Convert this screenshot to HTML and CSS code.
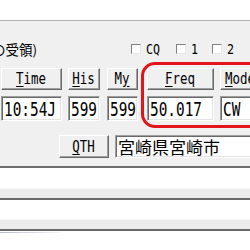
FILE: index.html
```html
<!DOCTYPE html>
<html lang="ja">
<head>
  <meta charset="UTF-8" />
  <title>QSO Entry</title>
  <link rel="stylesheet" href="styles.css">
</head>
<body>
  <div class="window">
    <!-- Title area -->
    <div class="top"></div>

    <!-- Entry panel -->
    <div class="panel">
      <div class="opts">
        <span class="caption">の受領)</span>
        <label class="check"><span class="box"></span><span class="narrow">CQ</span></label>
        <label class="check"><span class="box"></span><span class="narrow">1</span></label>
        <label class="check"><span class="box"></span><span class="narrow">2</span></label>
      </div>

      <div class="entry">
        <div class="col col-time">
          <div class="btn"><span class="narrow"><u>T</u>ime</span></div>
          <div class="field"><span class="mono">10:54J</span></div>
        </div>
        <div class="col col-his">
          <div class="btn"><span class="narrow"><u>H</u>is</span></div>
          <div class="field"><span class="mono">599</span></div>
        </div>
        <div class="col col-my">
          <div class="btn"><span class="narrow">M<u>y</u></span></div>
          <div class="field"><span class="mono">599</span></div>
        </div>
        <div class="col col-freq">
          <div class="btn"><span class="narrow"><u>F</u>req</span></div>
          <div class="field"><span class="mono">50.017</span></div>
        </div>
        <div class="col col-mode">
          <div class="btn"><span class="narrow"><u>M</u>ode</span></div>
          <div class="field"><span class="mono">CW</span></div>
        </div>
      </div>

      <div class="qth-row">
        <div class="btn btn-qth"><span class="narrow"><u>Q</u>TH</span></div>
        <div class="field field-qth">宮崎県宮崎市</div>
      </div>

      <!-- annotation -->
      <div class="highlight"></div>
    </div>

    <!-- List below -->
    <div class="list-gap"></div>
    <div class="strip"></div>
    <div class="list-gap gap-2"></div>
    <div class="strip strip-2"></div>
    <div class="faint"></div>
  </div>
</body>
</html>
```

FILE: styles.css
```css
body {
  margin: 0;
  padding: 0;
  background-color: #fff;
  font-family: "Liberation Sans", "Noto Sans CJK JP", sans-serif;
  color: #000;
}

.window {
  width: 250px;
  height: 250px;
  overflow: hidden;
}

.top {
  height: 20px;
  background-color: #fff;
  border-bottom: 1px solid #b4b4b4;
}

.panel {
  position: relative;
  height: 145px;
  background-color: #f0f0f0;
  border-bottom: 2px solid #6d6d6d;
  display: flex;
  flex-direction: column;
}

.narrow {
  display: inline-block;
  font-family: "DejaVu Sans Mono", monospace;
  font-size: 15px;
  transform: scaleX(0.83);
}

.opts {
  margin-top: 19px;
  height: 18px;
  display: flex;
  align-items: center;
}

.caption {
  flex: 0 0 139px;
  margin-left: -8px;
  font-family: "Noto Sans CJK JP", sans-serif;
  font-size: 13.5px;
  white-space: nowrap;
}

.check {
  display: flex;
  align-items: center;
  gap: 5px;
  margin-right: 13px;
}

.check .narrow {
  font-size: 14px;
  transform-origin: left;
}

.box {
  width: 8px;
  height: 8px;
  background-color: #fff;
  border: 1px solid;
  border-color: #808080 #e6e6e6 #e6e6e6 #808080;
}

.entry {
  margin-top: 10px;
  padding-left: 1px;
  display: flex;
}

.col {
  display: flex;
  flex-direction: column;
  gap: 6px;
  flex: 0 0 auto;
}

.col-time { width: 61px; }
.col-his { width: 32px; margin-left: 6px; }
.col-my { width: 31px; margin-left: 7px; }
.col-freq { width: 67px; margin-left: 9px; }
.col-mode { width: 40px; margin-left: 6px; }

.btn {
  height: 22px;
  box-sizing: border-box;
  background-color: #f0f0f0;
  border: 1px solid;
  border-color: #fff #696969 #696969 #fff;
  box-shadow: inset -1px -1px #a0a0a0;
  display: flex;
  align-items: center;
  justify-content: center;
  white-space: nowrap;
  overflow: visible;
}

.btn u {
  text-underline-offset: 2px;
}

.field {
  height: 25px;
  box-sizing: border-box;
  background-color: #fff;
  border: 1px solid;
  border-color: #a0a0a0 #fff #fff #a0a0a0;
  box-shadow: inset 1px 1px #696969, inset -1px -1px #e3e3e3;
  padding-left: 2px;
  display: flex;
  align-items: center;
  white-space: nowrap;
  overflow: hidden;
}

.mono {
  display: inline-block;
  font-family: "DejaVu Sans Mono", monospace;
  font-size: 20px;
  transform: scaleX(0.72);
  transform-origin: left;
}

.qth-row {
  margin-top: 14px;
  padding-left: 59px;
  display: flex;
  gap: 6px;
}

.btn-qth {
  flex: 0 0 50px;
  height: 23px;
}

.field-qth {
  flex: 0 0 160px;
  height: 23px;
  font-family: "Noto Sans CJK JP", sans-serif;
  font-size: 17px;
}

.highlight {
  position: absolute;
  top: 41px;
  left: 141px;
  width: 140px;
  height: 66px;
  box-sizing: border-box;
  border: 3px solid #e3141c;
  border-radius: 14px;
}

.list-gap {
  height: 20px;
}

.gap-2 {
  height: 19px;
}

.strip {
  height: 9px;
  background-color: #ececec;
  border-top: 1px solid #f6f6f6;
  border-bottom: 2px solid #6a6a6a;
}

.strip-2 {
  height: 9px;
}

.faint {
  width: 60px;
  height: 1px;
  margin-top: 1px;
  background: linear-gradient(to right, #b8bcc8, #f4f5f8);
}
```
